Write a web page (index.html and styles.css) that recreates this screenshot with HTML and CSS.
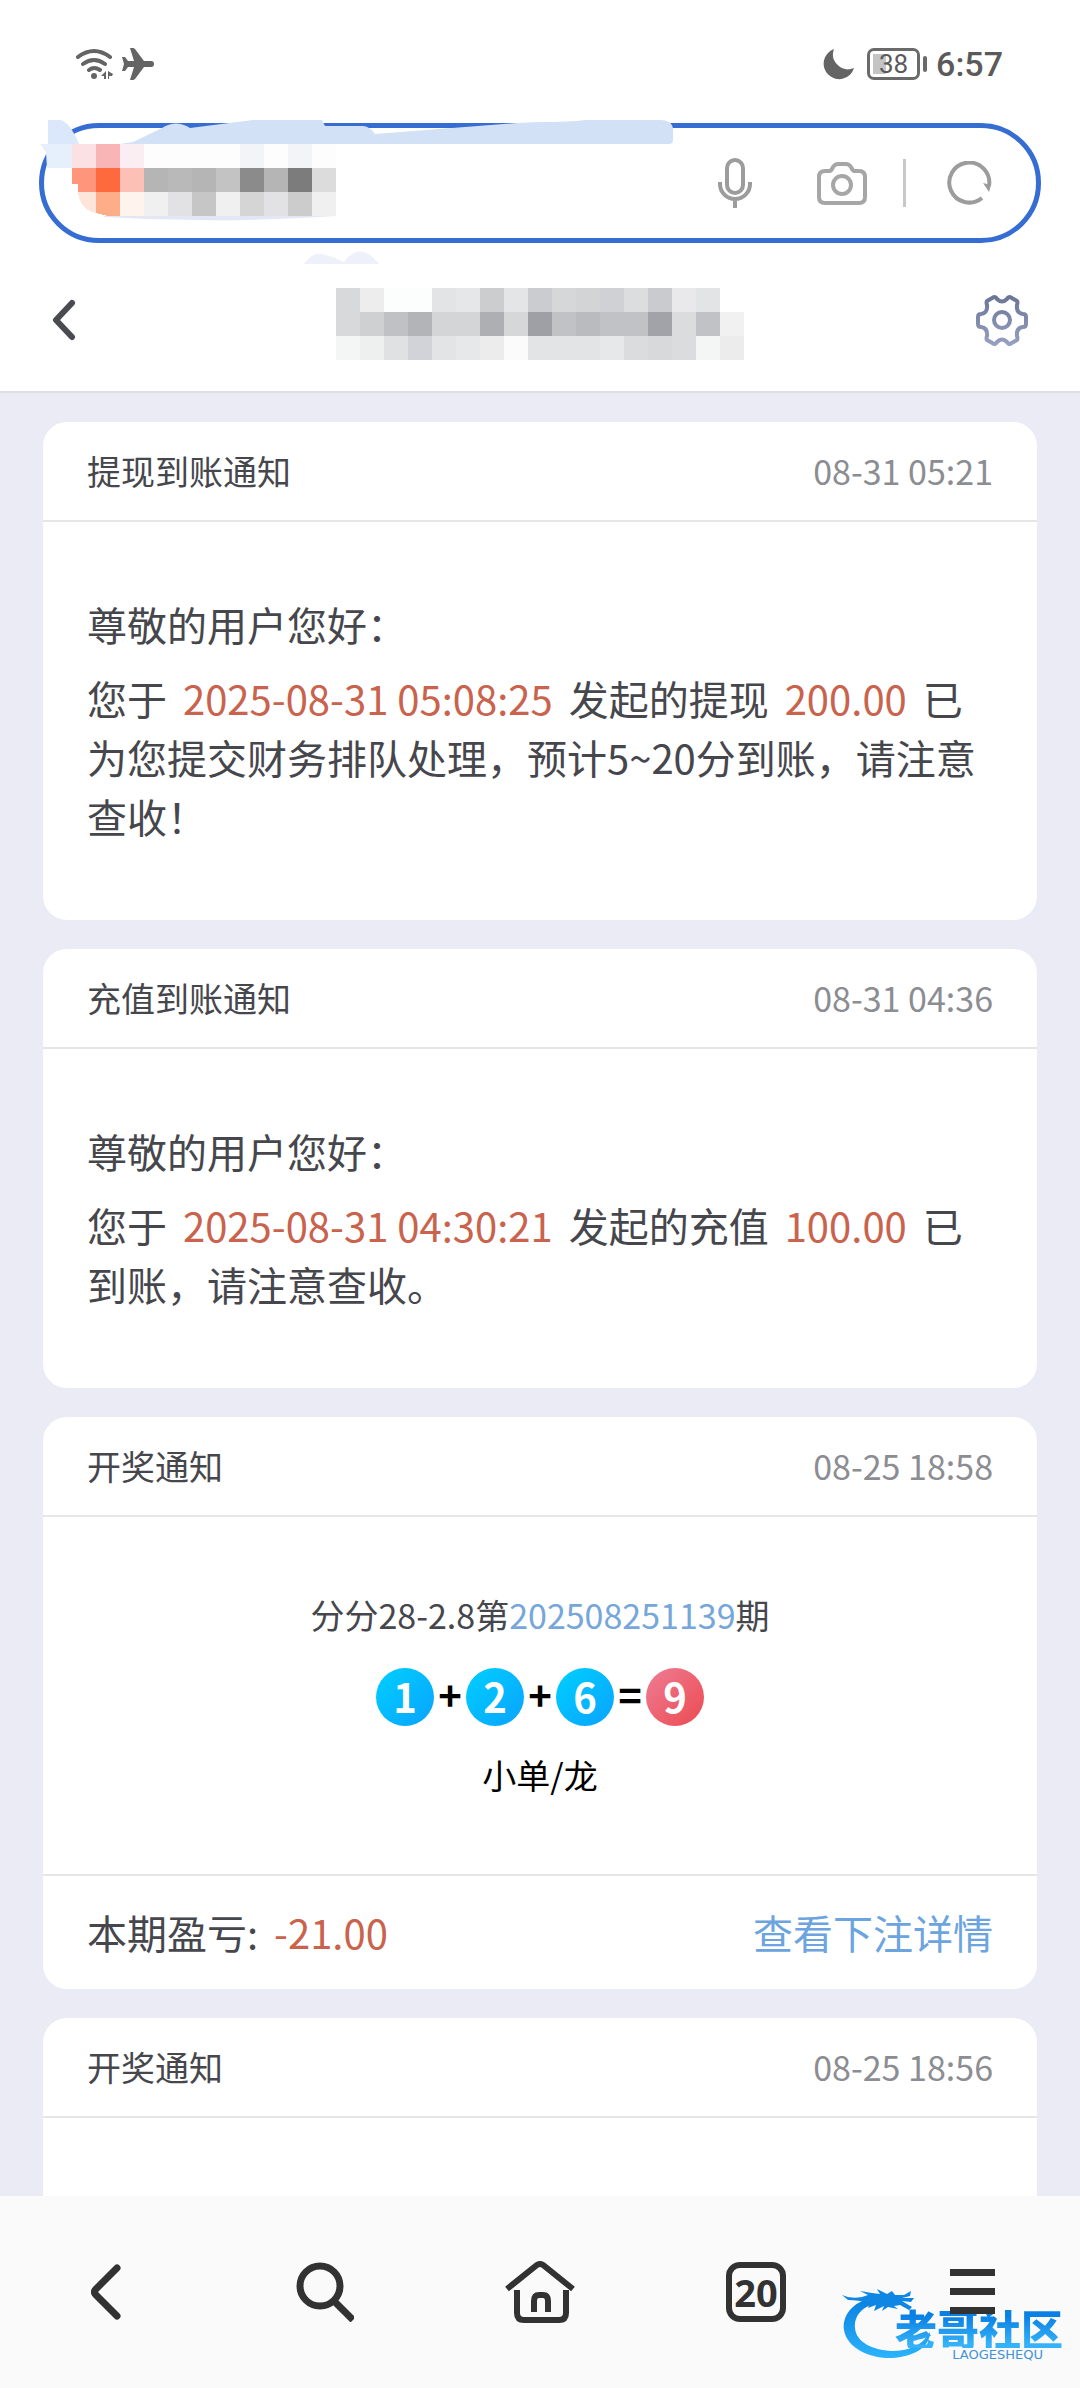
FILE: index.html
```html
<!DOCTYPE html>
<html lang="zh-CN">
<head>
<meta charset="utf-8">
<meta name="viewport" content="width=device-width, initial-scale=1">
<title>消息通知</title>
<link rel="stylesheet" href="styles.css">
</head>
<body>
<div class="app">
  <div class="status">
    <div class="status-group">
      <svg width="38" height="32" viewBox="0 0 38 32" fill="none" stroke="#646464" stroke-width="4" stroke-linecap="round" aria-hidden="true">
        <path d="M2 9Q18 -3 34 9M7 16Q18 8 29 16M13 22Q18 18 24 22"/>
        <circle cx="18" cy="28" r="3" fill="#646464" stroke="none"/>
        <path d="M25 28L30 23V31H28V28ZM32 23V31L33 31V28H36L37 26Z" fill="#646464" stroke="none"/>
      </svg>
      <svg width="32" height="32" viewBox="0 0 32 32" fill="#646464" aria-hidden="true">
        <path d="M29 13a3 3 0 0 1 0 6H22L13 31Q12 32 11 32H8L12 19H6L3 23H0L2 16L0 9H3L6 13H12L8 0H11Q12 0 13 1L22 13Z"/>
      </svg>
    </div>
    <div class="status-group status-right">
      <svg width="32" height="32" viewBox="0 0 32 32" fill="#646464" aria-hidden="true">
        <path d="M11 1A15.500 15.500 0 1 0 31 20A15 15 0 0 1 11 1Z"/>
      </svg>
      <span class="battery"><span class="battery-box"><span class="battery-text">38</span></span><span class="battery-nub"></span></span>
      <span class="clock">6:57</span>
    </div>
  </div>

  <form class="search">
    <input class="search-input" type="text" aria-label="网址">
    <button class="icon-btn mic" type="button" aria-label="语音">
      <svg width="34" height="50" viewBox="0 0 34 50" fill="none" stroke="#9c9c9c" stroke-width="4">
        <rect x="9" y="2" width="16" height="33" rx="8"/>
        <path d="M2 24v2a15 15 0 0 0 30 0v-2M17 41v9"/>
      </svg>
    </button>
    <button class="icon-btn camera" type="button" aria-label="拍照">
      <svg width="50" height="43" viewBox="0 0 50 43" fill="none" stroke="#a6a6a6" stroke-width="4">
        <path d="M8 9h4q2 0 3-2l1-2q2-3 5-3h8q3 0 5 3l1 2q1 2 3 2h4q6 0 6 6v20q0 6-6 6H8q-6 0-6-6V15q0-6 6-6z"/>
        <circle cx="25" cy="23" r="9"/>
      </svg>
    </button>
    <span class="divider"></span>
    <button class="icon-btn reload" type="button" aria-label="刷新">
      <svg width="45" height="44" viewBox="0 0 45 44" fill="none" stroke="#9c9c9c" stroke-width="4">
        <path d="M35 37A20 20 0 1 1 42 25"/>
        <path d="M36 22L42 31L44 24Z" fill="#9c9c9c" stroke="none"/>
      </svg>
    </button>
    <svg class="search-cover" width="640" height="148" viewBox="39 118 640 148" aria-hidden="true">
      <path fill="#dbe7fa" d="M48 120H60Q70 122 79 144H48Z"/>
      <path fill="#d3e1f6" d="M120 144L133 142L162 128Q176 119 190 128L253 120H322L325 126H363Q369 126 375 134L517 123L540 122Q570 122 585 120H660Q673 120 673 130V140Q673 144 669 144Z"/>
      <path fill="#fdfdfe" d="M72 144H336V216H110Q84 214 78 192L72 184Z"/>
      <path fill="#e6effc" d="M40 144H72V168H47L46 152Z"/>
      <path fill="#e2e7f6" d="M104 216H336Q220 224 104 217Z"/>
      <path fill="#eef1fa" d="M304 264Q312 252 322 254Q334 257 344 262Q360 240 379 264Z"/>
      <g shape-rendering="crispEdges">
        <path fill="#fbe1e3" d="M72 144h24v24h-24z"/><path fill="#f9b5b5" d="M96 144h24v24h-24z"/><path fill="#fbeef2" d="M120 144h24v24h-24z"/><path fill="#f3f4f8" d="M240 144h24v24h-24zM288 144h24v24h-24z"/>
        <path fill="#ff967c" d="M72 168h24v24h-18v-8h-6z"/><path fill="#fe6a3e" d="M96 168h24v24h-24z"/><path fill="#fdc0b7" d="M120 168h24v24h-24z"/><path fill="#b5b5b5" d="M144 168h24v24h-24zM192 168h24v24h-24zM264 168h24v24h-24z"/><path fill="#b9b9b9" d="M168 168h24v24h-24z"/><path fill="#c3c3c3" d="M216 168h24v24h-24z"/><path fill="#8b8b8b" d="M240 168h24v24h-24z"/><path fill="#7c7c7c" d="M288 168h24v24h-24z"/><path fill="#dcdcdc" d="M312 168h24v24h-24z"/>
        <path fill="#fde5da" d="M78 192h18v21Q80 210 78 192z"/><path fill="#ffad88" d="M96 192h24v24h-12l-12-3z"/><path fill="#fff3ee" d="M120 192h24v24h-24z"/><path fill="#f0f0f0" d="M144 192h24v24h-24zM216 192h24v24h-24zM312 192h24v24h-24z"/><path fill="#e2e2e4" d="M168 192h24v24h-24zM264 192h24v24h-24z"/><path fill="#c6c6c6" d="M192 192h24v24h-24z"/><path fill="#d5d5d5" d="M240 192h24v24h-24z"/><path fill="#cccccc" d="M288 192h24v24h-24z"/>
      </g>
    </svg>
  </form>

  <header class="titlebar">
    <button class="icon-btn" type="button" aria-label="返回">
      <svg width="24" height="42" viewBox="0 0 24 42" fill="none" stroke="#4a4a52" stroke-width="6" stroke-linecap="round" stroke-linejoin="round">
        <path d="M20 4L4 21L20 38"/>
      </svg>
    </button>
    <svg class="title-mosaic" width="408" height="80" viewBox="0 0 408 80" shape-rendering="crispEdges" aria-hidden="true">
      <g transform="translate(0 8)">
        <path fill="#d8d9db" d="M0 0h24v48H0z"/><path fill="#ededee" d="M24 0h24v24H24z"/><path fill="#fcfdfd" d="M48 0h48v24H48z"/><path fill="#e3e4e6" d="M96 0h24v24H96z"/><path fill="#e6e7e9" d="M120 0h24v24h-24z"/><path fill="#cccdcf" d="M144 0h24v24h-24z"/><path fill="#e4e5e7" d="M168 0h24v24h-24z"/><path fill="#cbccd0" d="M192 0h24v24h-24z"/><path fill="#d6d7d8" d="M216 0h24v24h-24z"/><path fill="#d3d4d6" d="M240 0h24v24h-24z"/><path fill="#d0d1d4" d="M264 0h24v24h-24z"/><path fill="#dcdddf" d="M288 0h24v24h-24z"/><path fill="#cacbcf" d="M312 0h24v24h-24z"/><path fill="#e9e9eb" d="M336 0h24v24h-24z"/><path fill="#e3e4e6" d="M360 0h24v24h-24z"/>
        <path fill="#cfd0d1" d="M24 24h24v24H24z"/><path fill="#c0c1c5" d="M48 24h24v24H48z"/><path fill="#b3b4b8" d="M72 24h24v24H72z"/><path fill="#d4d5d7" d="M96 24h48v24H96z"/><path fill="#aeafb3" d="M144 24h24v24h-24z"/><path fill="#d6d7d9" d="M168 24h24v24h-24z"/><path fill="#9fa0a5" d="M192 24h24v24h-24z"/><path fill="#c1c2c5" d="M216 24h24v24h-24zM264 24h48v24h-48zM360 24h24v24h-24z"/><path fill="#babbbf" d="M240 24h24v24h-24z"/><path fill="#a2a3a8" d="M312 24h24v24h-24z"/><path fill="#dbdcde" d="M336 24h24v24h-24z"/><path fill="#f1f1f1" d="M384 24h24v24h-24z"/>
        <path fill="#f4f5f5" d="M0 48h24v24H0zM360 48h24v24h-24z"/><path fill="#eeefef" d="M24 48h24v24H24z"/><path fill="#e0e1e3" d="M48 48h24v24H48z"/><path fill="#d2d3d8" d="M72 48h24v24H72z"/><path fill="#e3e4e6" d="M96 48h24v24H96zM192 48h72v24h-72z"/><path fill="#e7e8ea" d="M120 48h24v24h-24zM264 48h24v24h-24z"/><path fill="#ececed" d="M144 48h24v24h-24zM384 48h24v24h-24z"/><path fill="#fbfbfb" d="M168 48h24v24h-24z"/><path fill="#dbdcde" d="M288 48h24v24h-24zM336 48h24v24h-24z"/><path fill="#d8d9da" d="M312 48h24v24h-24z"/>
      </g>
    </svg>
    <button class="icon-btn" type="button" aria-label="设置">
      <svg width="52" height="51" viewBox="0 0 52 51" fill="none" stroke="url(#gear)" stroke-width="4" stroke-linejoin="round">
        <defs><linearGradient id="gear" x1="0" y1="0" x2="0" y2="51" gradientUnits="userSpaceOnUse"><stop stop-color="#6a7596"/><stop offset="1" stop-color="#97a1c0"/></linearGradient></defs>
        <path d="M18 2L11 6Q10 7 11 10Q12 18 5 19Q2 19 2 22V29Q2 32 5 32Q12 33 11 41Q10 44 11 45L18 49Q20 49 21 47Q26 42 31 47Q32 49 34 49L41 45Q42 44 41 41Q40 33 47 32Q50 32 50 29V22Q50 19 47 19Q40 18 41 10Q42 7 41 6L34 2Q32 2 31 4Q26 9 21 4Q20 2 18 2Z"/>
        <circle cx="26" cy="25" r="8"/>
      </svg>
    </button>
  </header>

  <main class="feed">
    <article class="card">
      <div class="card-head"><h2 class="card-title">提现到账通知</h2><time class="card-time">08-31 05:21</time></div>
      <div class="card-body">
        <p>尊敬的用户您好：</p>
        <p>您于 <span class="hot">2025-08-31 05:08:25</span> 发起的提现 <span class="hot">200.00</span> 已为您提交财务排队处理，预计5~20分到账，请注意查收！</p>
      </div>
    </article>

    <article class="card">
      <div class="card-head"><h2 class="card-title">充值到账通知</h2><time class="card-time">08-31 04:36</time></div>
      <div class="card-body">
        <p>尊敬的用户您好：</p>
        <p>您于 <span class="hot">2025-08-31 04:30:21</span> 发起的充值 <span class="hot">100.00</span> 已到账，请注意查收。</p>
      </div>
    </article>

    <article class="card">
      <div class="card-head"><h2 class="card-title">开奖通知</h2><time class="card-time">08-25 18:58</time></div>
      <div class="draw">
        <p class="draw-name">分分28-2.8第<span class="issue">202508251139</span>期</p>
        <div class="balls">
          <span class="ball">1</span><span class="op">+</span><span class="ball">2</span><span class="op">+</span><span class="ball">6</span><span class="op">=</span><span class="ball ball-sum">9</span>
        </div>
        <p class="draw-result">小单/龙</p>
      </div>
      <div class="card-foot">
        <span>本期盈亏: <span class="hot">-21.00</span></span>
        <a class="detail" href="#detail">查看下注详情</a>
      </div>
    </article>

    <article class="card">
      <div class="card-head"><h2 class="card-title">开奖通知</h2><time class="card-time">08-25 18:56</time></div>
      <div class="draw"></div>
    </article>
  </main>

  <nav class="toolbar">
    <button class="tool" type="button" aria-label="后退">
      <svg width="34" height="60" viewBox="0 0 34 60" fill="none" stroke="#323232" stroke-width="7" stroke-linecap="round">
        <path d="M26 6L5 27Q2 30 5 33L26 54"/>
      </svg>
    </button>
    <button class="tool" type="button" aria-label="搜索">
      <svg width="60" height="60" viewBox="0 0 60 60" fill="none" stroke="#323232" stroke-width="7">
        <circle cx="26" cy="24" r="20"/><path d="M39 38L59 58"/>
      </svg>
    </button>
    <button class="tool" type="button" aria-label="主页">
      <svg width="70" height="62" viewBox="0 0 70 62" fill="none" stroke="#323232" stroke-width="6">
        <path d="M2 28L32 4Q35 2 38 4L68 28"/>
        <path d="M12 29V52Q12 59 19 59H54Q61 59 61 52V29"/>
        <path d="M29 51V40Q29 34 34 34H38Q43 34 43 40V51"/>
      </svg>
    </button>
    <button class="tool" type="button" aria-label="标签页"><span class="tabs">20</span></button>
    <button class="tool menu" type="button" aria-label="菜单">
      <svg width="45" height="46" viewBox="0 0 45 46" fill="#323232"><path d="M0 0h45v7H0zM0 19h45v7H0zM0 38h45v7H0z"/></svg>
    </button>
    <div class="brand">
      <svg class="brand-mark" width="92" height="72" viewBox="0 0 92 72" aria-hidden="true">
        <defs><linearGradient id="wave" x1="0" y1="0" x2="0" y2="1"><stop stop-color="#0a7fe0"/><stop offset="1" stop-color="#2bb4fb"/></linearGradient></defs>
        <path fill="url(#wave)" d="M30 10C10 14 0 28 2 42C5 60 28 71 50 70C70 69 88 60 88 44C80 58 66 63 50 63C30 62 14 54 13 40C12 28 20 18 36 15Z"/>
        <path fill="#0f86e4" d="M0 7Q8 11 20 9L26 7L18 3L30 5L38 6L35 1L45 6L50 3L53 7L62 7L69 3L68 8L60 10L72 10L69 14L60 13L70 19L67 22L58 17L52 18L56 21L46 19L40 23L42 18L32 23L34 17L26 20L28 15Q16 12 6 12Z"/>
      </svg>
      <div class="brand-text">
        <span class="brand-name">老哥社区</span>
        <span class="brand-latin">LAOGESHEQU</span>
      </div>
    </div>
  </nav>
</div>
</body>
</html>
```
FILE: styles.css
```css
* { box-sizing: border-box; }

body {
  margin: 0;
  background: #fff;
  color: #46474d;
  font-family: "Noto Sans CJK SC", sans-serif;
}

h2, p { margin: 0; font-weight: 400; }

button {
  border: 0;
  padding: 0;
  background: none;
  color: inherit;
  font: inherit;
}

svg { display: block; }

.app {
  display: flex;
  flex-direction: column;
  height: 100vh;
}

/* Status bar */
.status {
  display: flex;
  justify-content: space-between;
  padding: 44px 77px 39px 76px;
  font-family: Roboto, sans-serif;
  color: #5a5a5a;
}
.status-group { display: flex; align-items: center; gap: 8px; height: 40px; }
.status-right { gap: 12px; }
.battery { display: flex; align-items: center; gap: 3px; }
.battery-box {
  display: flex;
  width: 53px;
  height: 32px;
  padding: 3px;
  border: 3px solid #6a6a6a;
  border-radius: 7px;
  background: linear-gradient(90deg, #c4c4c4 13px, transparent 13px) 3px 3px / 41px 20px no-repeat;
}
.battery-text { width: 41px; font-size: 26px; line-height: 20px; text-align: center; }
.battery-nub { width: 4px; height: 16px; border-radius: 2px; background: #6a6a6a; }
.clock { margin-left: -3px; font-size: 34px; font-weight: 500; line-height: 40px; }

/* Address bar */
.search {
  position: relative;
  display: flex;
  align-items: center;
  height: 120px;
  margin: 0 39px;
  padding-right: 44px;
  border: 5px solid #356dd2;
  border-radius: 60px;
  background: #fff;
}
.search-input {
  flex: 1;
  min-width: 0;
  height: 60px;
  margin-left: 60px;
  border: 0;
  outline: 0;
  background: transparent;
  font: inherit;
  font-size: 34px;
}
.mic { margin-right: 65px; }
.camera { margin-right: 36px; }
.divider { width: 3px; height: 48px; margin-right: 41px; background: #c8c8c8; }
.search-cover {
  position: absolute;
  top: -10px;
  left: -5px;
  pointer-events: none;
}

/* Page title */
.titlebar {
  display: flex;
  align-items: center;
  justify-content: space-between;
  height: 150px;
  padding: 6px 52px 0;
  border-bottom: 2px solid #dedee4;
}
.title-mosaic { margin-left: 28px; }

/* Notices */
.feed {
  flex: 1;
  min-height: 0;
  padding: 29px 43px 0;
  overflow-y: auto;
  scrollbar-width: none;
  background: #ebebf5;
}
.card {
  margin-bottom: 29px;
  border-radius: 24px;
  background: #fff;
}
.card-head {
  display: flex;
  align-items: center;
  justify-content: space-between;
  height: 100px;
  padding: 0 44px;
  border-bottom: 2px solid #e6e6e8;
  font-size: 34px;
  line-height: 50px;
}
.card-title { font-size: 34px; }
.card-time { color: #8c8d92; }
.card-body {
  display: grid;
  gap: 15px;
  padding: 73px 44px 74px;
  font-size: 40px;
  line-height: 59px;
}
.hot { color: #c9634d; margin: 0 7px; }

.draw {
  display: flex;
  flex-direction: column;
  align-items: center;
  min-height: 357px;
  padding: 73px 44px 74px;
  font-size: 34px;
  line-height: 50px;
}
.issue { color: #76a6da; }
.balls { display: flex; align-items: center; margin: 28px 0 24px; }
.ball {
  width: 58px;
  height: 58px;
  border-radius: 50%;
  background: linear-gradient(135deg, #00d0ff, #0aa2ff);
  color: #fff;
  font-size: 40px;
  font-weight: 700;
  line-height: 56px;
  text-align: center;
}
.ball-sum { background: linear-gradient(135deg, #ee7d95, #ec4a50); }
.op {
  width: 32px;
  color: #000;
  font-size: 40px;
  font-weight: 700;
  line-height: 50px;
  height: 56px;
  text-align: center;
}
.draw-result { color: #000; }
.card-foot {
  display: flex;
  align-items: center;
  justify-content: space-between;
  height: 115px;
  padding: 0 44px;
  border-top: 2px solid #e6e6e8;
  font-size: 40px;
  line-height: 59px;
}
.detail { color: #6ba4de; text-decoration: none; }

/* Browser toolbar */
.toolbar {
  position: relative;
  display: flex;
  height: 192px;
  background: #fafafa;
}
.tool {
  flex: 1;
  display: flex;
  align-items: center;
  justify-content: center;
}
.menu { z-index: 1; }
.tabs {
  width: 60px;
  height: 60px;
  border: 6px solid #323232;
  border-radius: 14px;
  color: #323232;
  font-family: "Noto Sans", sans-serif;
  font-size: 38px;
  font-weight: 700;
  line-height: 48px;
  text-align: center;
}
.brand {
  position: absolute;
  right: 17px;
  bottom: 26px;
  display: grid;
  width: 221px;
  pointer-events: none;
}
.brand-mark, .brand-text { grid-area: 1 / 1; }
.brand-text {
  display: flex;
  flex-direction: column;
  align-items: flex-end;
  padding-top: 20px;
}
.brand-name {
  background: linear-gradient(#0a80e4 20%, #35b2f8 90%);
  background-clip: text;
  color: transparent;
  font-size: 42px;
  font-weight: 900;
  line-height: 40px;
}
.brand-latin {
  padding-right: 20px;
  color: #3f93d6;
  font-family: "DejaVu Sans", sans-serif;
  font-size: 13px;
  line-height: 14px;
}
```
